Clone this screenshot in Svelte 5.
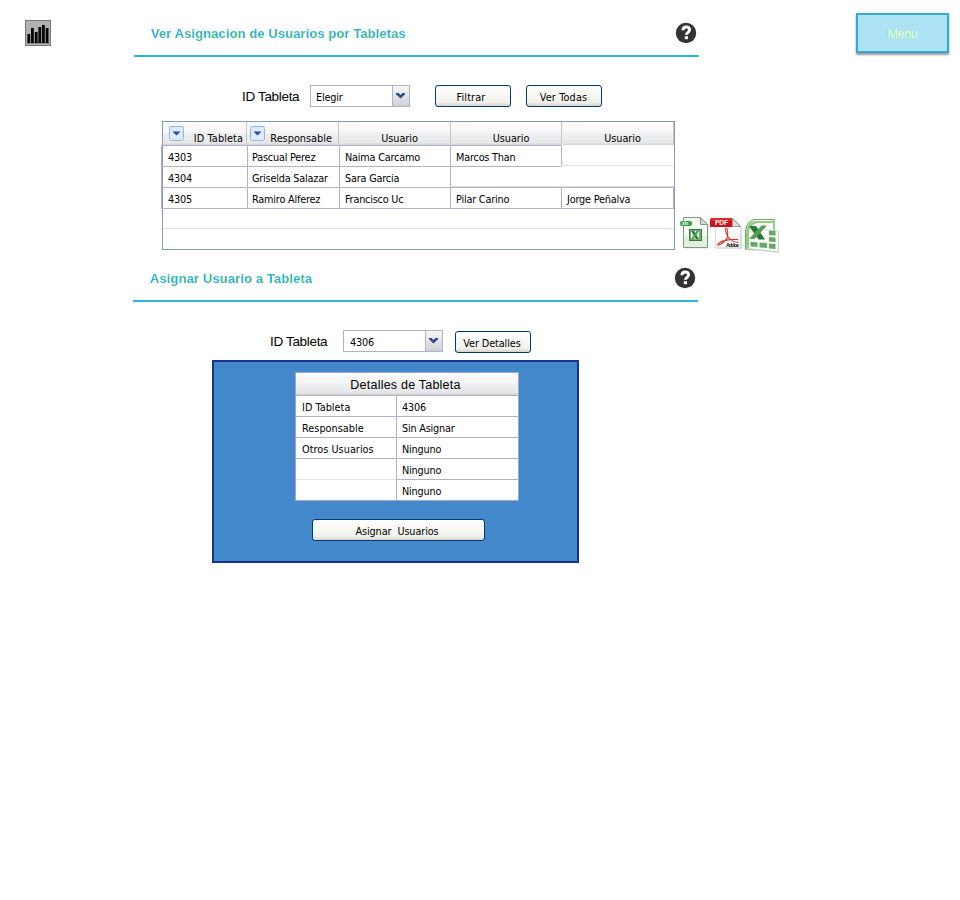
<script>
  const columns = ['ID Tableta', 'Responsable', 'Usuario', 'Usuario', 'Usuario'];
  const rows = [
    ['4303', 'Pascual Perez', 'Naima Carcamo', 'Marcos Than', ''],
    ['4304', 'Griselda Salazar', 'Sara Garcia', '', ''],
    ['4305', 'Ramiro Alferez', 'Francisco Uc', 'Pilar Carino', 'Jorge Peñalva']
  ];
  const details = [
    ['ID Tableta', '4306'],
    ['Responsable', 'Sin Asignar'],
    ['Otros Usuarios', 'Ninguno'],
    ['', 'Ninguno'],
    ['', 'Ninguno']
  ];
  const bars = [[2.4, 14], [6, 8], [9.8, 12], [13.4, 7], [17, 5], [20.7, 8]];
</script>

{#snippet help()}
  <svg class="help" width="22" height="22" viewBox="0 0 22 22">
    <circle cx="11" cy="11" r="10.2" fill="#333" />
    <path d="M7.9 8.300C8 5.700 9.300 4.900 11.100 4.900c2 0 3.400 1.100 3.400 2.900 0 2.700-3 2.400-3 5" fill="none" stroke="#fff" stroke-width="3" />
    <rect x="9.800" y="14.200" width="3.200" height="3" fill="#fff" />
  </svg>
{/snippet}

{#snippet select(value)}
  <div class="select">
    <span>{value}</span>
    <i><svg width="9" height="7" viewBox="0 0 9 7"><path d="M0 0h2.500l2 2 2-2H9v1.200L4.500 5.500 0 1.200z" fill="#2b4887" /></svg></i>
  </div>
{/snippet}

<div class="page">
  <svg class="logo" width="26" height="26" viewBox="0 0 26 26">
    <rect width="26" height="26" fill="#777" />
    <rect x="1" y="1" width="24" height="24" fill="#b1b1b1" />
    <rect x="2" y="22" width="22" height="2" fill="#8b8b8b" />
    {#each bars as [x, y]}
      <rect {x} {y} width="2.800" height={23 - y} fill="#050505" />
    {/each}
  </svg>

  <main>
    <header class="first">
      <h2>Ver Asignacion de Usuarios por Tabletas</h2>
      {@render help()}
    </header>
    <div class="filter f1">
      <span class="label">ID Tableta</span>
      {@render select('Elegir')}
      <button>Filtrar</button>
      <button>Ver Todas</button>
    </div>

    <div class="listing">
      <div class="table">
        <div class="thead cols">
          {#each columns as name, i}
            <div class="th" class:menu={i < 2}>
              {#if i < 2}
                <svg width="15" height="15" viewBox="0 0 15 15">
                  <rect x=".5" y=".5" width="14" height="14" rx="2" fill="#dcebfd" stroke="#91b5e2" />
                  <path d="M3.500 5.500h8L7.500 9.500z" fill="#224bab" />
                </svg>
              {/if}
              <span>{name}</span>
            </div>
          {/each}
        </div>
        {#each rows as row}
          <div class="cols row">
            {#each row as cell}
              <div class="td" class:empty={!cell}>{cell}</div>
            {/each}
          </div>
        {/each}
        <div class="blank"></div>
      </div>
      <div class="exports">
        <svg width="30" height="34" viewBox="0 0 30 34">
          <path d="M4.5 2.500h17l7 7v23h-24z" fill="#bbb" opacity=".5" />
          <path d="M3.500 1.500h17l7 7v23h-24z" fill="#f4fcf2" stroke="#8a9190" />
          <path d="M4 20h23v11H4z" fill="#dff3da" />
          <path d="M20.500 1.500v7h7z" fill="#d5d9d6" stroke="#8a9190" />
          <rect x="0" y="5" width="12" height="5" rx="2" fill="#37a348" />
          <text x="2" y="9.200" font-size="4.500" fill="#eaffea" font-weight="bold">xls</text>
          <rect x="9.500" y="13.500" width="12" height="11" fill="#72ad72" stroke="#3d7845" />
          <rect x="11" y="15" width="8" height="8" fill="#f0f7ef" />
          <path d="M11 15h3l5 8h-3z" fill="#287d37" />
          <path d="M19 15h-2.500l-5.500 8h2.500z" fill="#4b9c55" />
        </svg>
        <svg width="34" height="34" viewBox="0 0 34 34">
          <path d="M6 3h18l8 8v22H6z" fill="#bbb" opacity=".5" />
          <path d="M5.500 2.500h17l8 8v21h-25z" fill="#fcfcfc" stroke="#ddd" />
          <path d="M22.500 2.500v8h8z" fill="#ddd" stroke="#999" />
          <path d="M1 2h21v9H0V4z" fill="#cf1015" />
          <path d="M1 2h21v3H0z" fill="#e0272b" />
          <text x="5" y="9.300" font-size="7" font-weight="bold" fill="#fff" textLength="13" lengthAdjust="spacingAndGlyphs">PDF</text>
          <path d="M16 12c-1.500 2 0 5 1.500 8 2.500 4 7 7 11 6M18 20c-1 3-5 7-9 9-1.500 .5-2-.5 0-2 4-2.500 10-4 19-3.500M16 12c2 1 2 4 1.500 8" fill="none" stroke="#e03235" stroke-width="1.100" />
          <text x="16" y="30.500" font-size="5.500" font-weight="bold" fill="#111" textLength="13">Adobe</text>
        </svg>
        <svg width="36" height="36" viewBox="0 0 36 36">
          <path d="M10 3h21v9l4 1v22l-20-2-14-1V15q1-9 9-12z" fill="#999" opacity=".35" />
          <path d="M10 1.500h20v11.500l3.500 .5v19.500l-19-2H1.500V13q1-9 8.500-11.500z" fill="#f8fcf6" stroke="#73a96b" stroke-width="1.200" />
          <path d="M2 30V14Q3 4 11 3h18v2H13Q5 7 5 16v14z" fill="#95cb82" />
          <path d="M13 11.500l21 1.500v20.500l-29-3 1-7z" fill="#fbfffa" stroke="#d4ddd2" stroke-width=".6" />
          <path d="M25 12.500l6.500 .5v4.500l-6.500-.3zM25 19l6.500 .4v4.500l-6.500-.4zM25 25.500l6.500 .5v5l-6.500-.6zM15.500 24.500l7.500 .5v5l-7.500-.6zM6.500 24l7 .3v4.700l-7-.5z" fill="#66a865" />
          <path d="M5 8h7l9 13.500h-6.500z" fill="#287839" />
          <path d="M23 7.500h-5.500L5 21h5.500z" fill="#5aa157" />
        </svg>
      </div>
    </div>

    <header class="second">
      <h2>Asignar Usuario a Tableta</h2>
      {@render help()}
    </header>
    <div class="filter f2">
      <span class="label">ID Tableta</span>
      {@render select('4306')}
      <button>Ver Detalles</button>
    </div>

    <section class="panel">
      <div class="details">
        <div class="caption">Detalles de Tableta</div>
        {#each details as [key, value]}
          <div class="detail">
            <div class="key">{key}</div>
            <div class="value">{value}</div>
          </div>
        {/each}
      </div>
      <button class="wide">Asignar&nbsp; Usuarios</button>
    </section>
  </main>

  <div class="menu-button">Menu</div>
</div>

<style>
  :global(body) { background: #fff; }
  .page { width: 960px; height: 900px; display: flex; align-items: flex-start; overflow: hidden; font: 10.8px/14px "DejaVu Sans Condensed", "DejaVu Sans", sans-serif; letter-spacing: -.2px; color: #000; }
  .page * { box-sizing: border-box; }
  .logo { margin: 20px 82px 0 25px; flex: none; }
  main { width: 650px; flex: none; display: flex; flex-direction: column; align-items: flex-start; }
  header { width: 565px; display: flex; justify-content: space-between; border-bottom: 2px solid #32b2e4; }
  .first { height: 57px; margin-left: 1px; padding: 22px 2px 0 17px; }
  .second { height: 52px; margin-top: -4px; padding: 17px 2px 0 17px; }
  h2 { margin: 3px 0 0; height: 20px; font: bold 13px/17px "Liberation Sans", Arial, sans-serif; letter-spacing: .09px; color: transparent; background: repeating-linear-gradient(90deg, #2bb1df 0 5px, #42bd7c 8px 10px, #2bb1df 13px); background-clip: text; }
  .second h2 { letter-spacing: .12px; }
  .help { flex: none; }
  .filter { display: flex; align-items: flex-start; }
  .f1 { margin: 28px 0 0 109px; }
  .f2 { margin: 28px 0 0 137px; }
  .label { width: 68px; margin-top: 3px; font: 13.500px/17px "Liberation Sans", Arial, sans-serif; letter-spacing: -.33px; }
  .f2 .label { width: 73px; }
  .select { width: 100px; height: 22px; border: 1px solid #b1b1c9; display: flex; background: #fff; }
  .select span { flex: 1; padding: 5px 0 0 5px; }
  .f2 .select span { padding-left: 6px; }
  .select i { width: 17px; border-left: 1px solid #b1b1c9; background: linear-gradient(#f7f7f7, #cfd0d6); display: flex; justify-content: center; padding: 7px 1px 0 0; }
  button { width: 76px; height: 22px; padding: 3px 3px 0 0; border: 1px solid #003c74; border-radius: 3px; background: linear-gradient(#fff, #f1f1eb 82%, #d8d2c8); font: inherit; letter-spacing: 0; color: #000; }
  .f1 button { padding-right: 1px; letter-spacing: .15px; }
  .f1 button:first-of-type { margin: 0 15px 0 25px; padding-right: 4px; }
  .f2 button { margin: 1px 0 0 12px; padding-right: 2px; letter-spacing: -.1px; }

  .listing { display: flex; align-items: flex-start; margin: 14px 0 0 29px; }
  .table { width: 513px; height: 129px; flex: none; border: 1px solid #7f9db9; }
  .cols { display: grid; grid-template-columns: 86px 92px 111px 111px 113px; }
  .thead { height: 23px; grid-template-columns: 84px 92px 112px 111px 112px; background: linear-gradient(#fafafa, #f7f7f7 45%, #efeff1 50%, #e7e8ea 90%, #cfd0d1); }
  .th { display: flex; justify-content: center; border-right: 1px solid #c9c6b7; padding: 10px 0 0 10px; height: 22px; letter-spacing: -.05px; }
  .th.menu { justify-content: space-between; padding: 4px 3px 0 6px; letter-spacing: .1px; }
  .th.menu + .th.menu { padding: 4px 6px 0 3px; letter-spacing: .02px; }
  .th.menu span { margin-top: 6px; }
  .row { height: 21px; margin: 0 0 0 -2px; width: 513px; }
  .td { padding: 5px 0 0 5px; border: 1px solid #b1b1c9; border-right-width: 0; height: 22px; }
  .td:nth-child(2) { padding-left: 4px; }
  .td:first-child { padding-left: 6px; }
  .td:last-child { border-right-width: 1px; }
  .td.empty { border-color: transparent transparent #e1e1e1; height: 21px; }
  .td:not(.empty) + .td.empty { border-left-color: #b1b1c9; }
  .blank { height: 21px; border-bottom: 1px solid #e1e1e1; }
  .exports { display: flex; align-items: flex-start; padding: 96px 0 0 5px; }
  .exports svg { flex: none; margin-top: -1px; }
  .exports svg:last-child { margin-top: 1px; }
  .exports text { font-family: "Liberation Sans", Arial, sans-serif; letter-spacing: 0; }

  .panel { width: 367px; height: 203px; margin: 7px 0 0 79px; border: 2px solid #17358b; background: #4488cc; display: flex; flex-direction: column; align-items: flex-start; padding: 10px 0 0 81px; }
  .details { width: 224px; border: 1px solid #9ba9c5; background: #fff; }
  .caption { height: 22px; background: linear-gradient(#fafafa, #f6f6f6 45%, #eeeff0 50%, #e5e6e8 90%, #cdcecf); text-align: center; padding: 4px 3px 0 0; font: 12.500px/17px "Liberation Sans", Arial, sans-serif; letter-spacing: .22px; }
  .detail { display: flex; height: 21px; }
  .key { width: 100px; padding: 5px 0 0 6px; border-top: 1px solid #b1b1c9; letter-spacing: .03px; }
  .detail:last-child .key { border-color: #e1e1e1; }
  .value { flex: 1; padding: 5px 0 0 5px; border: solid #b1b1c9; border-width: 1px 0 0 1px; }
  .wide { width: 173px; margin: 18px 0 0 17px; letter-spacing: -.1px; }
  .menu-button { width: 93px; height: 40px; margin: 13px 0 0 73px; flex: none; border: 2px solid #32aad2; background: #ade1f4; box-shadow: 0 2px 2px #999; text-align: center; padding-top: 11px; font: 12.500px/16px "Liberation Sans", Arial, sans-serif; letter-spacing: -.3px; color: #f0fbdc; text-shadow: -1px 0 #80efb0; }
</style>
